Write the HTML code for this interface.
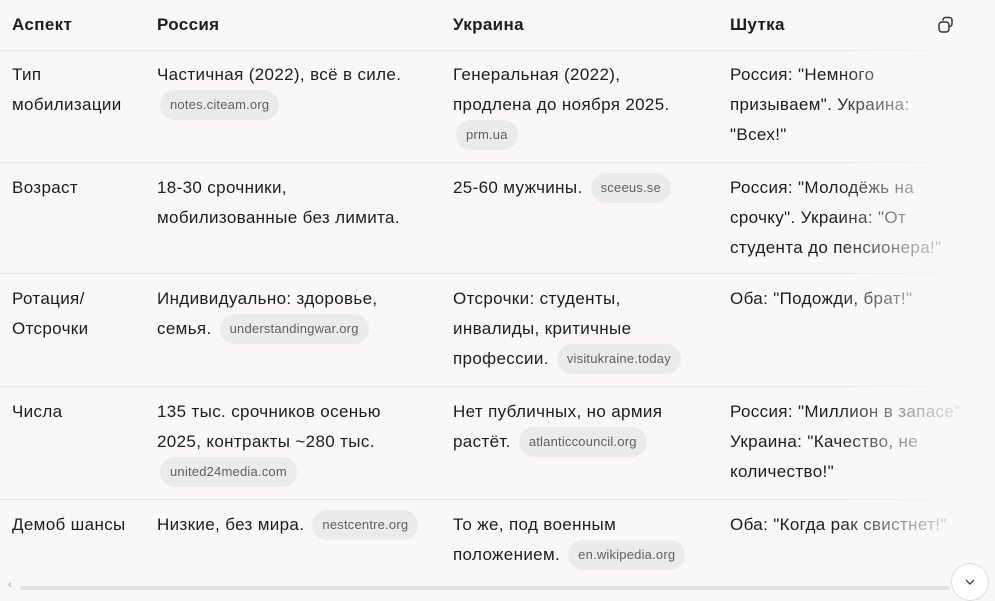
<!DOCTYPE html>
<html><head><meta charset="utf-8"><style>
*{margin:0;padding:0;box-sizing:border-box}
body{width:995px;height:595px;background:#f9f8f6;font-family:"Liberation Sans",sans-serif;color:#1d1d1d;position:relative;overflow:hidden;font-size:17px;letter-spacing:0.35px}
.c{position:absolute;line-height:30px;white-space:nowrap}
.h{font-weight:bold;top:10px}
.line{position:absolute;left:0;width:950px;height:1px;background:#e6e5e2}
.chip{display:inline-block;background:#ebebe9;color:#5f5f5f;font-size:13px;letter-spacing:0.2px;line-height:30px;height:30px;border-radius:15px;padding:0 10px;margin-left:3px;vertical-align:middle;position:relative;top:-1px}
.fade{position:absolute;left:835px;top:50px;width:125px;height:520px;background:linear-gradient(to right,rgba(249,248,246,0),rgba(249,248,246,0.6) 60%,rgba(249,248,246,0.9))}
</style></head><body>
<div class="c h" style="left:12px">Аспект</div>
<div class="c h" style="left:157px">Россия</div>
<div class="c h" style="left:453px">Украина</div>
<div class="c h" style="left:730px">Шутка</div>
<svg style="position:absolute;left:937px;top:16px" width="18" height="18" viewBox="0 0 18 18" fill="none" stroke="#333" stroke-width="1.5"><rect x="2" y="6" width="10" height="10" rx="3"/><path d="M6 4.5V4a2.5 2.5 0 0 1 2.5-2.5h4A2.5 2.5 0 0 1 15 4v4a2.5 2.5 0 0 1-2.5 2.5H12"/></svg>

<div class="line" style="top:50px"></div>
<div class="c" style="left:12px;top:60px">Тип<br>мобилизации</div>
<div class="c" style="left:157px;top:60px">Частичная (2022), всё в силе.<br><span class="chip">notes.citeam.org</span></div>
<div class="c" style="left:453px;top:60px">Генеральная (2022),<br>продлена до ноября 2025.<br><span class="chip">prm.ua</span></div>
<div class="c" style="left:730px;top:60px">Россия: "Немного<br>призываем". Украина:<br>"Всех!"</div>

<div class="line" style="top:162px"></div>
<div class="c" style="left:12px;top:173px">Возраст</div>
<div class="c" style="left:157px;top:173px">18-30 срочники,<br>мобилизованные без лимита.</div>
<div class="c" style="left:453px;top:173px">25-60 мужчины. <span class="chip">sceeus.se</span></div>
<div class="c" style="left:730px;top:173px">Россия: "Молодёжь на<br>срочку". Украина: "От<br>студента до пенсионера!"</div>

<div class="line" style="top:273px"></div>
<div class="c" style="left:12px;top:284px">Ротация/<br>Отсрочки</div>
<div class="c" style="left:157px;top:284px">Индивидуально: здоровье,<br>семья. <span class="chip">understandingwar.org</span></div>
<div class="c" style="left:453px;top:284px">Отсрочки: студенты,<br>инвалиды, критичные<br>профессии. <span class="chip">visitukraine.today</span></div>
<div class="c" style="left:730px;top:284px">Оба: "Подожди, брат!"</div>

<div class="line" style="top:386px"></div>
<div class="c" style="left:12px;top:397px">Числа</div>
<div class="c" style="left:157px;top:397px">135 тыс. срочников осенью<br>2025, контракты ~280 тыс.<br><span class="chip">united24media.com</span></div>
<div class="c" style="left:453px;top:397px">Нет публичных, но армия<br>растёт. <span class="chip">atlanticcouncil.org</span></div>
<div class="c" style="left:730px;top:397px">Россия: "Миллион в запасе"<br>Украина: "Качество, не<br>количество!"</div>

<div class="line" style="top:499px"></div>
<div class="c" style="left:12px;top:510px">Демоб шансы</div>
<div class="c" style="left:157px;top:510px">Низкие, без мира. <span class="chip">nestcentre.org</span></div>
<div class="c" style="left:453px;top:510px">То же, под военным<br>положением. <span class="chip">en.wikipedia.org</span></div>
<div class="c" style="left:730px;top:510px">Оба: "Когда рак свистнет!"</div>

<div class="fade"></div>
<div style="position:absolute;left:960px;top:0;width:35px;height:595px;background:#f9f8f6"></div>
<div style="position:absolute;left:8px;top:579px;font-size:11px;color:#999">‹</div>
<div style="position:absolute;left:20px;top:586px;width:930px;height:4px;border-radius:2px;background:#e4e3e0"></div>
<div style="position:absolute;left:951px;top:563px;width:38px;height:38px;border-radius:50%;background:#fff;border:1px solid #ddd"></div>
<svg style="position:absolute;left:964px;top:578px" width="12" height="8" viewBox="0 0 12 8" fill="none" stroke="#444" stroke-width="1.4"><path d="M2 2l4 4 4-4"/></svg>
</body></html>
